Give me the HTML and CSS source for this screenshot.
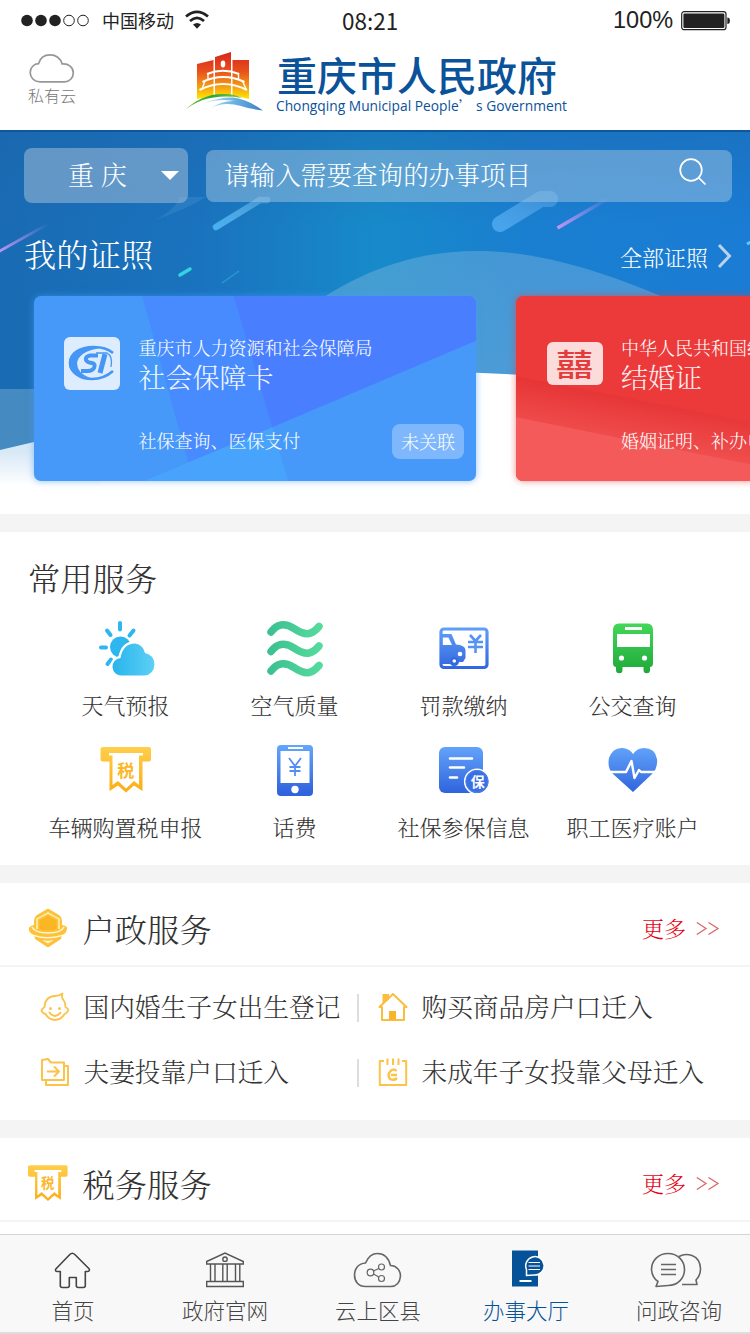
FILE: index.html
```html
<!DOCTYPE html>
<html lang="zh-CN">
<head>
<meta charset="utf-8">
<title>重庆市人民政府</title>
<link rel="stylesheet" href="styles.css">
</head>
<body>
<div class="app">
  <header class="top">
    <div class="status">
      <svg class="signal" width="70" height="14" viewBox="0 0 70 14"><g fill="#222"><circle cx="7" cy="6.500" r="5.800"/><circle cx="21" cy="6.500" r="5.800"/><circle cx="35" cy="6.500" r="5.800"/></g><g fill="none" stroke="#222"><circle cx="49" cy="6.500" r="5.300"/><circle cx="63" cy="6.500" r="5.300"/></g></svg>
      <span class="carrier">中国移动</span>
      <svg class="wifi" width="24" height="20" viewBox="0 0 24 20"><g fill="none" stroke="#222" stroke-width="2.700"><path d="M1 6.500Q12-2.800 23 6.500"/><path d="M5 11Q12 4.600 19 11"/></g><path d="M8 14.600Q12 11.200 16 14.600L12 18.800Z" fill="#222"/></svg>
      <span class="clock">08:21</span>
      <span class="percent">100%</span>
      <svg class="battery" width="50" height="20" viewBox="0 0 50 20"><rect x=".7" y=".7" width="44.300" height="18" rx="2.500" fill="none" stroke="#222" stroke-width="1.200"/><rect x="2.400" y="2.400" width="41" height="14.600" rx="1.300" fill="#222"/><path d="M46.300 6.500q2.600 0 2.600 3.200t-2.600 3.200z" fill="#222"/></svg>
    </div>
    <div class="brandbar">
      <a class="cloud">
        <svg width="46" height="31" viewBox="0 0 46 31"><path d="M11 28.800C5 28.800 1.200 24.500 1.200 19.400C1.200 14.500 5 10.800 9.500 10.700C11 5 15.500 1.800 21 1.800C27 1.800 31.500 5.600 33.200 11C39.500 10.300 44.300 14.500 44.300 19.800C44.300 25 40.500 28.800 35.500 28.800Z" fill="none" stroke="#979797" stroke-width="1.700"/></svg>
        <span>私有云</span>
      </a>
      <div class="logo">
        <svg class="emblem" width="80" height="62" viewBox="0 0 80 62">
          <defs>
            <linearGradient id="tower" gradientUnits="userSpaceOnUse" x1="0" y1="2" x2="0" y2="46"><stop offset="0" stop-color="#d9291c"/><stop offset=".4" stop-color="#e8521c"/><stop offset=".75" stop-color="#f6a012"/><stop offset="1" stop-color="#ffe100"/></linearGradient>
            <linearGradient id="river" x1="0" y1="0" x2="1" y2="0"><stop offset="0" stop-color="#bfe3f5"/><stop offset=".5" stop-color="#6db4e4"/><stop offset="1" stop-color="#3c7fc4"/></linearGradient>
            <linearGradient id="hillg" x1="0" y1="0" x2="1" y2="0"><stop offset="0" stop-color="#7cbb2b"/><stop offset=".5" stop-color="#2da637"/><stop offset="1" stop-color="#8dc63a"/></linearGradient>
          </defs>
          <path d="M13 12L29.500 8V44L13 47ZM31 5L47 0V43H31ZM48.500 8H65V47L48.500 43Z" fill="url(#tower)"/>
          <g fill="none" stroke="#fff"><path stroke-width="2" d="M23 22Q39 15.500 55 22"/><path stroke-width="2" d="M18.500 30Q39 20 60.500 30"/><path stroke-width="2" d="M15.500 38Q39 26 63 38"/><path stroke-width="1.400" d="M24 21V28M21 29L18 37M54.500 21V28M58.500 29L62 37"/></g>
          <ellipse cx="39" cy="12" rx="2.300" ry="3.400" fill="#fff"/>
          <path d="M0 59Q18 41 41 42Q51 42 58 46Q22 40 0 59Z" fill="url(#hillg)"/>
          <path d="M20 51Q36 45 49 45.500Q63 47 79 58.500Q66 57 57 54Q40 49 27 56Q39 48 51 49Q34 46 20 51Z" fill="url(#river)"/>
        </svg>
        <div class="wordmark">
          <h1>重庆市人民政府</h1>
          <svg class="english" width="294" height="18"><text x="0" y="13.500" textLength="291" lengthAdjust="spacingAndGlyphs">Chongqing Municipal People<tspan class="quote">’</tspan> s Government</text></svg>
        </div>
      </div>
    </div>
  </header>

  <section class="hero">
    <svg class="scene" width="750" height="384" viewBox="0 0 750 384">
      <defs>
        <linearGradient id="sky" x1="0" y1="0" x2="1" y2="0"><stop offset="0" stop-color="#196bb3"/><stop offset=".27" stop-color="#1a73be"/><stop offset=".5" stop-color="#178aca"/><stop offset=".7" stop-color="#1a7fd0"/><stop offset="1" stop-color="#1a7cd4"/></linearGradient>
        <linearGradient id="dusk" x1="0" y1="0" x2="0" y2="1"><stop offset="0" stop-color="#1c66ac" stop-opacity=".45"/><stop offset=".25" stop-color="#1c66ac" stop-opacity="0"/></linearGradient>
        <linearGradient id="mound" x1="0" y1="0" x2="0" y2="1"><stop offset="0" stop-color="#8fc0e0" stop-opacity=".36"/><stop offset="1" stop-color="#8fc0e0" stop-opacity=".5"/></linearGradient>
        <linearGradient id="snow" gradientUnits="userSpaceOnUse" x1="0" y1="322" x2="0" y2="356"><stop offset="0" stop-color="#d8e9f6"/><stop offset="1" stop-color="#fff"/></linearGradient>
        <linearGradient id="pink" gradientUnits="objectBoundingBox" x1="0" y1="1" x2="1" y2="0"><stop offset="0" stop-color="#c095f5"/><stop offset="1" stop-color="#c095f5" stop-opacity="0"/></linearGradient>
        <linearGradient id="beam" x1="0" y1="1" x2="1" y2="0"><stop offset="0" stop-color="#48b0f0"/><stop offset="1" stop-color="#78c2f0" stop-opacity=".4"/></linearGradient>
        <linearGradient id="beam2" x1="0" y1="1" x2="1" y2="0"><stop offset="0" stop-color="#47a3ec"/><stop offset="1" stop-color="#5ba6e4" stop-opacity=".5"/></linearGradient>
      </defs>
      <rect width="750" height="384" fill="url(#sky)"/>
      <rect width="750" height="384" fill="url(#dusk)"/>
      <path d="M155 90Q175 80 180 67H206Q185 80 155 90Z" fill="#5fa4dc" opacity=".22"/>
      <path d="M216 97L260 70H267" stroke="url(#beam)" stroke-width="6.500" stroke-linecap="round" fill="none"/>
      <path d="M500 94L541 69H550" stroke="url(#beam2)" stroke-width="16" stroke-linecap="round" stroke-linejoin="round" fill="none"/>
      <path d="M557.500 98L609 68" stroke="url(#pink)" stroke-width="3.500"/>
      <path d="M-2 122L48 94" stroke="url(#pink)" stroke-width="3"/>
      <path d="M180 145L190 139" stroke="#35d3e2" stroke-width="3.500" stroke-linecap="round"/>
      <path d="M222 153L239 141" stroke="#2c98d4" stroke-width="1.500"/>
      <path d="M747 114L751 112" stroke="#57cdf1" stroke-width="3"/>
      <path d="M280 200C350 140 415 121 477 121C545 121 615 145 690 179V384H280Z" fill="url(#mound)"/>
      <path d="M0 259H60V384H0Z" fill="#83b5d5" opacity=".42"/>
      <path d="M0 320L34 312Q70 300 100 290V384H0Z" fill="url(#snow)"/>
      <path d="M100 290Q300 230 520 245L750 275V384H100Z" fill="#fff"/>
      <path d="M0 1H750" stroke="#0d579e" stroke-width="2"/>
    </svg>
    <div class="searchrow">
      <div class="region"><span>重 庆</span><i class="caret"></i></div>
      <div class="search"><span>请输入需要查询的办事项目</span>
        <svg width="28" height="28" viewBox="0 0 28 28" fill="none" stroke="#fff" stroke-width="1.700"><circle cx="13" cy="12" r="10.800"/><path d="M21 20L27.500 26.500"/></svg>
      </div>
    </div>
    <div class="herotitle">
      <h2>我的证照</h2>
      <a>全部证照<svg width="15" height="26" viewBox="0 0 15 26"><path d="M2 2L12.500 13L2 24" fill="none" stroke="#bcd2ea" stroke-width="3"/></svg></a>
    </div>
    <div class="cards">
      <article class="card card-blue">
        <svg class="facets" viewBox="0 0 442 185" preserveAspectRatio="none"><path d="M108 0H200L238 131L154 166Z" fill="#478bfe"/><path d="M199.500 0H442V44.500L238 131Z" fill="#497eff"/><path d="M109 185L154 166L159 185ZM154 166L238 131L254 185H159Z" fill="#47a3fb"/></svg>
        <div class="badge badge-si"><svg width="50" height="36" viewBox="0 0 50 36"><path d="M46 8Q39 2 27 2C12 2 3 9 3 18C3 27 13 34 25 34Q37 34 46 26" fill="none" stroke="#4696f5" stroke-width="2.600"/><path d="M34 3Q12 6 10 18Q10 28 23 33Q1 30 2 17Q4 4 25 1Z" fill="#4696f5"/><path d="M31 10.500H23Q18 11.500 19 15Q20 17.500 25 18Q29 19 27 23Q25 26 21 26H14" fill="none" stroke="#4696f5" stroke-width="4"/><path d="M38 9L33 28" stroke="#4696f5" stroke-width="5"/><path d="M29 8H40Q46 11 44 22" fill="none" stroke="#4696f5" stroke-width="1.300"/></svg></div>
        <div class="info"><p class="org">重庆市人力资源和社会保障局</p><h3>社会保障卡</h3><p class="desc">社保查询、医保支付</p></div>
        <span class="state">未关联</span>
      </article>
      <article class="card card-red">
        <svg class="facets" viewBox="0 0 442 185" preserveAspectRatio="none"><defs><linearGradient id="fold" gradientUnits="userSpaceOnUse" x1="120" y1="98" x2="108" y2="170"><stop offset="0" stop-color="#e63334"/><stop offset="1" stop-color="#f55b5b"/></linearGradient></defs><path d="M0 80L442 166V185H0Z" fill="url(#fold)"/><path d="M0 121L320 185H0Z" fill="#f55a5a"/></svg>
        <div class="badge badge-joy"><span>囍</span></div>
        <div class="info"><p class="org">中华人民共和国结婚证</p><h3>结婚证</h3><p class="desc">婚姻证明、补办申请</p></div>
      </article>
    </div>
  </section>

  <section class="panel common">
    <h2>常用服务</h2>
    <div class="grid">
      <a><svg width="56" height="56" viewBox="-1 -1 56 56"><defs><linearGradient id="wg"><stop offset="0" stop-color="#28b4ed"/><stop offset="1" stop-color="#5dd0f4"/></linearGradient></defs><g stroke="#2db7ee" stroke-width="4" stroke-linecap="round"><path d="M21 2V8.500M8 9.500L11.500 14M34.500 9.500L30.500 14.500M2 26.500H7M12 38.500L8.500 43"/></g><circle cx="21.500" cy="26" r="10.500" fill="#2db7ee"/><path d="M23 54.500A8.500 8.500 0 0 1 21.500 37Q24 22.500 36 22.500Q44 23.500 46 32Q55 34 55.500 43Q55 54 45 54.500Z" fill="url(#wg)" stroke="#fff" stroke-width="4.500" paint-order="stroke"/></svg><span>天气预报</span></a>
      <a><svg width="56" height="56" viewBox="0 0 56 56"><defs><linearGradient id="ag" gradientUnits="userSpaceOnUse" x1="0" y1="0" x2="56" y2="0"><stop offset="0" stop-color="#3abf91"/><stop offset="1" stop-color="#57dc9d"/></linearGradient></defs><g fill="none" stroke="url(#ag)" stroke-width="7.500" stroke-linecap="round"><path d="M4 12Q8.500 6 14 5Q20 4 27 8.500Q36 14.500 42 13.500Q47 12.500 52 6.500"/><path d="M4 31.500Q8.500 25.500 14 24.500Q20 23.500 27 28Q36 34 42 33Q47 32 52 26"/><path d="M4 51Q8.500 45 14 44Q20 43 27 47.500Q36 53.500 42 52.500Q47 51.500 52 45.500"/></g></svg><span>空气质量</span></a>
      <a><svg width="56" height="56" viewBox="0 0 56 56"><defs><linearGradient id="bg" gradientUnits="userSpaceOnUse" x1="0" y1="3" x2="0" y2="52"><stop offset="0" stop-color="#64a6fb"/><stop offset="1" stop-color="#2f62dc"/></linearGradient></defs><rect x="5" y="9" width="46" height="38.500" rx="3" fill="none" stroke="url(#bg)" stroke-width="3.200"/><path d="M5 14H15.500L20 24.500Q29 25 29.500 30V38L27 42H23A5 5 0 0 1 14 44H5ZM6.500 17.500V25H16L12.500 17.500Z" fill="url(#bg)" fill-rule="evenodd"/><circle cx="18.300" cy="41" r="2.800" fill="#fff" stroke="#3468df" stroke-width="2"/><circle cx="24" cy="34" r="2.300" fill="#fff"/><path d="M34 15L39.500 21L45 15M32 22H47M32 27H47M39.500 21V33" fill="none" stroke="#5594f5" stroke-width="2.600"/></svg><span>罚款缴纳</span></a>
      <a><svg width="56" height="56" viewBox="0 0 56 56"><defs><linearGradient id="gg" x1="0" y1="0" x2="0" y2="1"><stop offset="0" stop-color="#42d757"/><stop offset="1" stop-color="#20a93a"/></linearGradient></defs><path d="M14 3.500H42Q48 3.500 48 10V43Q48 47 45 47V50A3.200 3.200 0 0 1 38.500 50V47H17.500V50A3.200 3.200 0 0 1 11 50V47Q8 47 8 43V10Q8 3.500 14 3.500ZM20 7V10H37V7ZM12 14V27H45V14Z" fill="url(#gg)" fill-rule="evenodd"/><g fill="#fff"><circle cx="16.500" cy="38" r="2.600"/><circle cx="39.500" cy="38" r="2.600"/></g></svg><span>公交查询</span></a>
      <a><svg width="56" height="56" viewBox="0 0 56 56"><defs><linearGradient id="yg" gradientUnits="userSpaceOnUse" x1="0" y1="4" x2="0" y2="50"><stop offset="0" stop-color="#ffcf4c"/><stop offset="1" stop-color="#fbae17"/></linearGradient></defs><path id="taxslip" d="M5 5H51Q53 5 53 7V17Q53 19.500 51 19.500H44.500V49L36 43.500L28 50.500L20 43.500L11.500 49V19.500H5Q2.500 19.500 2.500 17V7Q2.500 5 5 5ZM11 11V13.500H14.500V43L20 39L28 46.500L36 39L41 43V13.500H45V11Z" fill="url(#yg)" fill-rule="evenodd"/><text class="taxmark" x="27.700" y="34.500" text-anchor="middle">税</text></svg><span>车辆购置税申报</span></a>
      <a><svg width="56" height="56" viewBox="0 0 56 56"><path d="M14 3H42Q46 3 46 7V50Q46 54 42 54H14Q10 54 10 50V7Q10 3 14 3ZM21 5V7H36V5ZM13.500 9V41H42.500V9Z" fill="url(#bg)" fill-rule="evenodd"/><circle cx="28" cy="47.500" r="3.700" fill="#fff"/><path d="M22 16L28 24L34 16M22.500 25H33.500M22.500 29H33.500M28 24V34" fill="none" stroke="#538ff2" stroke-width="1.800"/></svg><span>话费</span></a>
      <a><svg width="56" height="56" viewBox="0 0 56 56"><rect x="3" y="5" width="44" height="46" rx="6" fill="url(#bg)"/><path d="M14 16.500H36M14 25.500H28M14 35.500H21" stroke="#fff" stroke-width="2.600" stroke-linecap="round"/><circle cx="41" cy="39.500" r="12.300" fill="#3a70e4" stroke="#fff" stroke-width="1.600"/><circle cx="41" cy="39.500" r="11" fill="none" stroke="#4b83ea"/><text class="insured" x="41.700" y="44.500" text-anchor="middle">保</text></svg><span>社保参保信息</span></a>
      <a><svg width="56" height="56" viewBox="0 0 56 56"><path d="M28 50L8 32Q2 26 4 16Q8 5 18 6Q25 7 28 12Q32 6 39 6Q50 6 52 17Q53 26 47 32Z" fill="url(#bg)"/><path d="M3 30H21L26.500 19L29.500 36L34 28L36 30H53" fill="none" stroke="#fff" stroke-width="2.400" stroke-linejoin="round"/></svg><span>职工医疗账户</span></a>
    </div>
  </section>

  <section class="panel">
    <div class="sectionhead">
      <svg width="40" height="40" viewBox="0 0 40 40"><path d="M20 .5L31 7Q34 9 34 14V17Q40 18 39 21Q38 26 34 27L33 31L20 39.500L7 31L6 27Q1 25 .8 21Q.8 18 6 17V14Q6 9 9 7Z" fill="#fcc23a"/><path d="M9 21V11L20 5L31 11V21" fill="none" stroke="#ffe9a0" stroke-width="1.800"/><path d="M4 19Q7 25 20 25T36 19M6 27.500Q19 32 34 27.500" fill="none" stroke="#fff6d4" stroke-width="1.500"/><path d="M20 7.500L28.500 12.500V21Q20 23.500 11.500 21V12.500Z" fill="#fbb623"/><path d="M14 32Q20 33.500 26 32L20 35.500Z" fill="#fff5cc"/></svg>
      <h2>户政服务</h2><a class="more">更多<svg width="24" height="15" viewBox="0 0 24 15" fill="none" stroke="#d66" stroke-width="1.300"><path d="M.8 1.500L10 7.500L.8 13.500M12.500 1.500L22 7.500L12.500 13.500"/></svg></a>
    </div>
    <div class="links">
      <a><svg width="30" height="30" viewBox="0 0 30 30" fill="none" stroke="#fcc34b" stroke-width="1.800" stroke-linejoin="round"><path d="M4.500 15Q5 4.500 15 4Q19.500 4 22.500 1.500Q21 6 23.500 8Q25.500 10.500 25.500 15Q29 17 28 19Q26.500 21.500 24.500 22Q21 28 15 28T5.500 22Q3 21.500 1.500 19Q1.500 17 4.500 15Z"/><path d="M9 20Q15 28 21 20"/><g fill="#fcc34b" stroke="none"><circle cx="10.500" cy="16.500" r="1.500"/><circle cx="19.500" cy="16.500" r="1.500"/></g></svg><span>国内婚生子女出生登记</span></a>
      <a><svg width="30" height="30" viewBox="0 0 30 30" fill="none" stroke="#fcbd3d" stroke-width="2"><path d="M1.500 15L15 2L28.500 15H26V28H4V15Z" stroke-linejoin="round"/><path d="M5.500 10V3H10V7Z" fill="#fcbd3d"/><path d="M11 19H18V28H11Z" fill="#fcb32b" stroke="none"/></svg><span>购买商品房户口迁入</span></a>
      <a><svg width="30" height="30" viewBox="0 0 30 30" fill="none" stroke="#fcc34b" stroke-width="2" stroke-linejoin="round"><path d="M2 23V3L8 2L11 5.500H24V23ZM24 9H28V28H6V23M7 14.500H18M14 9.500L19 14.500L14 19.500"/></svg><span>夫妻投靠户口迁入</span></a>
      <a><svg width="30" height="30" viewBox="0 0 30 30" fill="none" stroke="#fcc34b" stroke-width="2"><path d="M6 4H1.800V28H28.200V4H24M9.500 1.500V8M15 1.500V8M20.500 1.500V8" stroke-linejoin="round"/><path d="M18.500 14Q16 11 12.500 14Q9 18 12 22Q16 24 19 21M13 18H19" stroke-width="2.500"/></svg><span>未成年子女投靠父母迁入</span></a>
    </div>
  </section>

  <section class="panel last">
    <div class="sectionhead">
      <svg width="40" height="40" viewBox="2.500 2 51 51"><use href="#taxslip"/><text class="taxmark" x="27.700" y="34.500" text-anchor="middle">税</text></svg>
      <h2>税务服务</h2><a class="more">更多<svg width="24" height="15" viewBox="0 0 24 15" fill="none" stroke="#d66" stroke-width="1.300"><path d="M.8 1.500L10 7.500L.8 13.500M12.500 1.500L22 7.500L12.500 13.500"/></svg></a>
    </div>
  </section>

  <nav class="tabs">
    <a><svg width="40" height="40" viewBox="0.700 0.500 40 40" fill="none" stroke="#444" stroke-width="1.600" stroke-linejoin="round"><path d="M17.500 4Q20 1.500 22.500 4L37 18.500Q37.500 21 35 21H33V35Q33 37 31 37H26Q24 37 24 35V27H17V35Q17 37 15 37H10Q8 37 8 35V21H5Q2.500 21 3.500 18.500Z"/></svg><span>首页</span></a>
    <a><svg width="40" height="40" viewBox="0 0.500 40 40" fill="none" stroke="#555" stroke-width="1.400"><path d="M1.700 11L20 2.500L38.300 11V13.500H1.700ZM1.700 31H38.300V36H1.700ZM5.500 13.500V31M10 13.500V31M17.800 13.500V31M22.200 13.500V31M30.500 13.500V31M34.800 13.500V31"/><circle cx="20" cy="8.700" r="2.200"/></svg><span>政府官网</span></a>
    <a><svg width="48" height="40" viewBox="0.500 0.500 48 40" fill="none" stroke="#666" stroke-width="1.600"><path d="M12 36C5 36 1 31 1 24.500C1 18 5 13 12 12.500Q16 3 24 3Q34 3 37 15C43 15 47 20 47 25.500Q46 36 37 36Z"/><g stroke-width="1.200"><circle cx="17" cy="22" r="3.300"/><circle cx="28" cy="16.500" r="3"/><circle cx="28" cy="28" r="3"/><path d="M20 20.500L25.300 18M20 23.500L25.300 26.500"/></g></svg><span>云上区县</span></a>
    <a class="current"><svg width="40" height="40" viewBox="0 0.500 40 40"><path d="M6 0H32V36H6Z" fill="#065299"/><path d="M13.500 30.500H25.500" stroke="#fff" stroke-width="2"/><path d="M20.500 25V19A9.200 9.200 0 1 1 28.500 24.500Z" fill="#065299" stroke="#fff" stroke-width="1.500"/><path d="M22.500 12H34M22.500 15.500H34M22.500 19H34" stroke="#fff"/></svg><span>办事大厅</span></a>
    <a><svg width="52" height="40" viewBox="3 0.500 52 40" fill="none" stroke="#666" stroke-width="1.600" stroke-linejoin="round"><path d="M29 6Q35 2.500 42 5Q50 8 50.500 18Q50.500 25 46 29.500L47 34H32"/><path d="M18 3C27.500 3 34.500 10 34.500 19C34.500 28 27.500 35 18 35L6 36L8 31Q2 27 1.500 19C1.500 10 8.500 3 18 3ZM11 14H26M11 19H26M11 24H26"/></svg><span>问政咨询</span></a>
  </nav>
</div>
</body>
</html>
```

FILE: styles.css
```css
* { box-sizing: border-box; }
body { margin: 0; background: #fff; }
h1, h2, h3, p { margin: 0; font-weight: 300; }
svg { display: block; flex: none; overflow: visible; }

.app {
  width: 750px;
  height: 1334px;
  overflow: hidden;
  display: flex;
  flex-direction: column;
  color: #333;
  font-family: "Noto Serif CJK SC", "Noto Sans CJK SC", serif;
  font-weight: 300;
  white-space: nowrap;
}

/* status bar and brand */
.top { height: 130px; background: #fff; font-family: "Noto Sans CJK SC", sans-serif; font-weight: 400; color: #222; }
.status { height: 41px; padding-left: 20px; display: flex; align-items: center; }
.carrier { width: 72px; margin-left: 12px; font-size: 18px; line-height: 36px; margin-top: -2px; }
.wifi { margin: 0 0 1px 11px; }
.clock { width: 62px; margin: -2px 0 0 133px; font-size: 22.500px; line-height: 36px; }
.percent { width: 60px; margin-left: 209px; font: 23.500px "Liberation Sans", sans-serif; }
.battery { margin-left: 8px; }
.brandbar { display: flex; height: 89px; padding-left: 28px; }
.cloud { width: 48px; padding-top: 12px; display: flex; flex-direction: column; align-items: center; font-size: 16px; font-weight: 300; line-height: 23px; color: #777; }
.cloud svg { margin-left: -1px; }
.logo { display: flex; margin-left: 108px; padding-top: 11px; }
.wordmark { margin-left: 12px; color: #0a5299; }
h1 { margin-left: 1px; font-size: 40px; font-weight: 500; line-height: 44px; }
.english { margin-top: 1px; font-family: "Open Sans", "Noto Sans", sans-serif; font-size: 14px; fill: #0a5299; }
.quote { font-family: "Noto Sans CJK SC", sans-serif; }

/* hero */
.hero { position: relative; height: 384px; overflow: hidden; color: #fff; }
.scene { position: absolute; inset: 0; z-index: 0; }
.searchrow, .herotitle, .cards { position: relative; z-index: 1; }
.searchrow { display: flex; align-items: center; padding: 18px 18px 0 24px; gap: 18px; }
.region { width: 164px; height: 55px; border-radius: 8px; padding: 0 9px 0 44px; background: rgba(177, 198, 219, .48); display: flex; align-items: center; justify-content: space-between; font-size: 26px; }
.caret { border: 9px solid transparent; border-top-color: #fff; border-bottom: 0; }
.search { flex: 1; height: 52px; border-radius: 8px; padding: 0 26px 0 18px; background: rgba(180, 208, 232, .43); display: flex; align-items: center; justify-content: space-between; font-size: 25.600px; }
.search svg { margin-bottom: 8px; }
.region span, .search span { line-height: 48px; margin-top: -3px; }
.herotitle { height: 92.500px; padding: 7px 18px 0 24px; display: flex; align-items: center; justify-content: space-between; }
.herotitle h2 { font-size: 32.300px; line-height: 44px; }
.herotitle a { display: flex; align-items: center; gap: 9px; padding-top: 9px; font-size: 22px; line-height: 30px; }
.herotitle a svg { margin-top: -3px; }
.cards { display: flex; gap: 40px; padding-left: 33.500px; }
.card { position: relative; flex: none; width: 442.500px; height: 185.500px; border-radius: 7px; overflow: hidden; display: flex; padding-left: 30.500px; }
.card-blue { background: #4799f9; box-shadow: 0 0 7px rgba(71, 153, 249, .6); }
.card-red { background: #ec3a3b; box-shadow: 0 0 7px rgba(236, 58, 59, .6); }
.facets { position: absolute; inset: 0; width: 100%; height: 100%; }
.badge { position: relative; width: 56px; border-radius: 6px; background: rgba(255, 255, 255, .82); display: flex; align-items: center; justify-content: center; }
.badge-si { height: 53px; margin-top: 41px; }
.badge-joy { height: 43px; margin-top: 46px; font: 500 37px "Noto Sans CJK SC", sans-serif; line-height: 38px; color: #e63b3d; }
.badge-joy span { transform: scaleY(.82); }
.info { position: relative; margin-left: 18.500px; padding-top: 39.500px; font-size: 18px; }
.org { line-height: 24px; }
.card h3 { font-size: 27px; line-height: 36px; opacity: .92; }
.desc { margin-top: 33px; line-height: 24px; }
.state { position: absolute; right: 12px; bottom: 22px; width: 72px; height: 35px; border-radius: 8px; background: rgba(255, 255, 255, .3); font-size: 18px; line-height: 34px; text-align: center; }

/* content panels */
.panel { border-top: 18px solid #f4f4f4; }
.common { height: 351px; padding: 23px 0 0 28px; }
.panel h2 { font-size: 32.300px; line-height: 44px; }
.grid { display: grid; grid-template-columns: repeat(4, 169px); grid-auto-rows: 122px; margin: 21px 0 0 13px; }
.grid a { display: flex; flex-direction: column; align-items: center; }
.grid a > span { margin-top: 14px; font-size: 22px; line-height: 30px; color: #333; }
.taxmark { font: 700 17px "Noto Sans CJK SC", sans-serif; fill: #fbb727; }
.insured { font: 700 14px "Noto Sans CJK SC", sans-serif; fill: #fff; }
.sectionhead { height: 84px; padding: 8px 30px 0 28px; border-bottom: 2px solid #f4f4f4; display: flex; align-items: center; }
.sectionhead h2 { margin: 0 auto 0 14.500px; }
.more { display: flex; align-items: center; gap: 10px; font-size: 22px; line-height: 30px; color: #e60012; }
.links { display: grid; grid-template-columns: 338px 1fr; grid-auto-rows: 65px; height: 153px; padding: 8px 0 0 40px; }
.links a { position: relative; display: flex; align-items: center; gap: 13.500px; font-size: 25.700px; }
.links a:nth-child(odd)::after { content: ""; position: absolute; right: 19px; width: 2px; height: 28px; background: #ddd; }
.links svg { margin-top: -2px; }
.links span { line-height: 36px; margin-top: -4px; }
.last { height: 114px; }

/* tab bar */
.tabs { height: 100px; border-top: 1px solid #d4d4d4; border-bottom: 2px solid #ddd; background: #f8f8f8; display: grid; grid-template-columns: 146px 158px 148px 148px 158px; font: 300 21.500px "Noto Sans CJK SC", sans-serif; color: #444; }
.tabs a { display: flex; flex-direction: column; align-items: center; padding-top: 15.500px; }
.tabs span { margin-top: 3.500px; line-height: 32px; }
.tabs .current { color: #065299; }
```
